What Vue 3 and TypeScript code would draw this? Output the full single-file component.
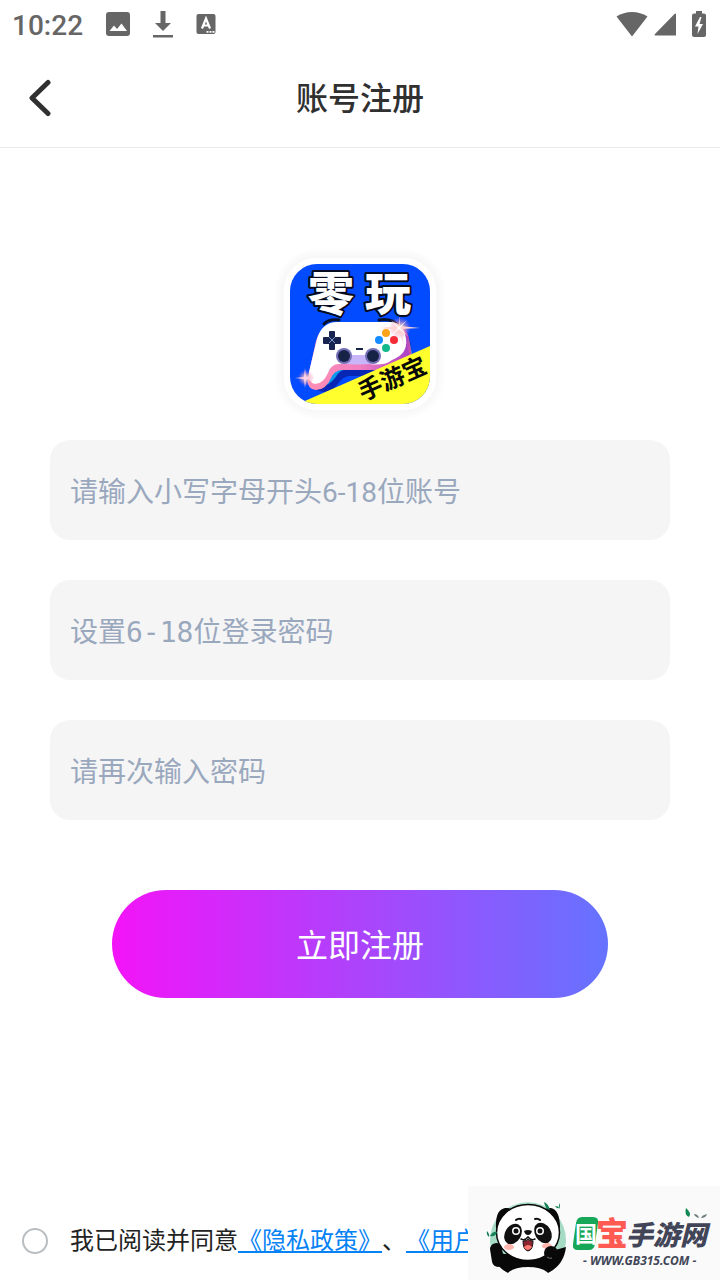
<script setup lang="ts">
import { reactive, ref } from 'vue'

interface Field {
  key: 'account' | 'password' | 'confirm'
  type: 'text' | 'password'
  placeholder: string
  mono: boolean
}

const fields: Field[] = [
  { key: 'account', type: 'text', placeholder: '请输入小写字母开头6-18位账号', mono: false },
  { key: 'password', type: 'password', placeholder: '设置6-18位登录密码', mono: true },
  { key: 'confirm', type: 'password', placeholder: '请再次输入密码', mono: true },
]

const form = reactive({ account: '', password: '', confirm: '' })
const agreed = ref(false)
</script>

<template>
  <div class="page">
    <div class="status">
      <div class="status-group">
        <span class="time">10:22</span>
        <svg width="24" height="24" viewBox="0 0 24 24">
          <path fill="#666" fill-rule="evenodd" d="M3 0h18a3 3 0 0 1 3 3v18a3 3 0 0 1-3 3H3a3 3 0 0 1-3-3V3a3 3 0 0 1 3-3zM3.500 19h17.500l-5.500-7.500-4.500 5.500-3-3.500z" />
        </svg>
        <svg width="20" height="28" viewBox="0 0 20 28">
          <path fill="#666" d="M7.500 1h5v12H18l-8 8-8-8h5.500zM0 25h20v2.500H0z" />
        </svg>
        <svg width="20" height="22" viewBox="0 0 20 22">
          <rect x="0.500" y="1" width="19" height="20" rx="2" fill="#666" />
          <path d="M6 15.500 10 5.500l4 10M7.300 12.500h5.400" fill="none" stroke="#fff" stroke-width="2.200" />
          <path d="M10.500 18h2v1.700h-2zM13.500 18h2v1.700h-2zM16.500 18h2v1.700h-2z" fill="#fff" />
        </svg>
      </div>
      <div class="status-group right">
        <svg width="32" height="26" viewBox="0 0 32 26">
          <path fill="#666" d="M16 25.500 0.500 5.500Q7.500 1 16 1t15.500 4.500z" />
        </svg>
        <svg width="23" height="24" viewBox="0 0 23 24">
          <path fill="#666" d="M22 1.500V23.500H1q-1-.5 0-1.500L20.500 2z" />
        </svg>
        <svg class="battery" width="14" height="28" viewBox="0 0 14 28">
          <path fill="#666" d="M4 1h6v2.500h2q2 0 2 2V25q0 2-2 2H2q-2 0-2-2V5.500q0-2 2-2h2z" />
          <path fill="#fff" d="M8 7 3 16.500h3.500L5.500 24 11 14H7.500L9.500 7z" />
        </svg>
      </div>
    </div>

    <header class="header">
      <button class="back" type="button" aria-label="返回">
        <svg width="24" height="38" viewBox="0 0 24 38">
          <path d="M20 3.500 4 19l16 15.500" fill="none" stroke="#303030" stroke-width="5" stroke-linecap="round" stroke-linejoin="round" />
        </svg>
      </button>
      <h1>账号注册</h1>
    </header>

    <main class="main">
      <div class="logo">
        <svg class="logo-art" width="140" height="140" viewBox="0 0 140 140" role="img" aria-label="零玩手游宝">
          <defs>
            <clipPath id="tile"><rect width="140" height="140" rx="27" /></clipPath>
            <linearGradient id="rim" x1="0" y1="0" x2="1" y2="0">
              <stop offset="0" stop-color="#ff8fb5" />
              <stop offset="0.500" stop-color="#f27fc0" />
              <stop offset="1" stop-color="#a73dc8" />
            </linearGradient>
            <linearGradient id="side" x1="0" y1="0" x2="0" y2="1">
              <stop offset="0" stop-color="#9a3fd0" />
              <stop offset="1" stop-color="#f0618f" />
            </linearGradient>
            <radialGradient id="glow">
              <stop offset="0" stop-color="#fff" />
              <stop offset="0.300" stop-color="#ffc9bd" stop-opacity="0.800" />
              <stop offset="1" stop-color="#f478b5" stop-opacity="0" />
            </radialGradient>
          </defs>
          <g clip-path="url(#tile)">
            <rect width="140" height="140" fill="#034bff" />
            <path d="M34 60q4-5 15-4M89 56q13-2 20 6" fill="none" stroke="#06112f" stroke-width="3" stroke-linecap="round" />
            <path d="M51 60h52q13 2 17 16l7 38q-5 19-23 7L90 112H59q-7 1-12 9-9 11-20 5l-3-10z" fill="#0726b3" />
            <path d="M53 60h50q12 2 16 15l7 31q1 16-13 12-8-3-17-13H57q-8 1-12 9-8 10-16 7l-4-9z" fill="#0999ec" />
            <path d="M100 60q16 0 19 14l6 36-35-2z" fill="url(#side)" />
            <path d="M48 59h54q12 2 14 16l6 29q1 15-13 12-8-3-14-10H51q-7 1-10 8-5 12-15 12-10-1-8-13l8-36q5-17 22-18z" fill="url(#rim)" />
            <path d="M47 58h54q13 1 15 17 2 15-14 21-7 6-23 4H49q-8 0-11 9-5 11-13 11-8-2-6-12l8-33q5-17 20-17z" fill="#fff" />
            <path d="M48 91h42l-4 8q-20 3-36 0z" fill="#c9b5fa" />
            <g fill="#192550">
              <rect x="39" y="67" width="6" height="19" rx="1" />
              <rect x="33" y="73" width="18" height="7" rx="1" />
            </g>
            <path d="m39 73 6 6m0-6-6 6" stroke="#7a9ccd" stroke-width="1" />
            <path d="M66 85h7" stroke="#172247" stroke-width="2" />
            <circle cx="54" cy="92" r="8" fill="#746fb6" />
            <circle cx="54" cy="92" r="6" fill="#172247" />
            <circle cx="83" cy="92" r="8" fill="#746fb6" />
            <circle cx="83" cy="92" r="6" fill="#172247" />
            <circle cx="96" cy="69" r="4" fill="#ffa31a" />
            <circle cx="89" cy="76" r="4" fill="#168bff" />
            <circle cx="104" cy="76" r="4" fill="#f52c37" />
            <circle cx="96" cy="84" r="4" fill="#13b98c" />
            <path d="M8 140 140 82v58z" fill="#ffff2d" />
            <circle cx="110" cy="64" r="11" fill="url(#glow)" />
            <path d="m109 50 1 12 20 2-19 1 3 17-5-16-19-2 19-2z" fill="#ffd5d5" />
            <path d="m101 56 8 7 8-7-7 8 8 8-9-7-8 7 7-8z" fill="#fff" />
            <circle cx="16" cy="114" r="8" fill="url(#glow)" />
            <path d="m15 104 1 9 9 1-9 1-1 9-1-9-9-1 9-1z" fill="#ffd0ea" />
          </g>
          <text class="brand" x="18" y="46">零</text>
          <text class="brand" x="75" y="46">玩</text>
          <text class="ribbon" transform="translate(73 137) rotate(-24)">手游宝</text>
        </svg>
      </div>

      <form class="form" @submit.prevent>
        <input
          v-for="field in fields"
          :key="field.key"
          v-model="form[field.key]"
          class="field"
          :class="{ mono: field.mono }"
          :type="field.type"
          :placeholder="field.placeholder"
          :aria-label="field.placeholder"
          autocomplete="off"
        />
        <button class="submit" type="submit">立即注册</button>
      </form>
    </main>

    <footer class="agreement">
      <input id="agree" v-model="agreed" class="tick" type="checkbox" />
      <span class="terms"><label for="agree">我已阅读并同意</label><a href="#privacy">《隐私政策》</a>、<a href="#terms">《用户协议》</a></span>
    </footer>

    <aside class="badge">
      <svg width="252" height="94" viewBox="0 0 252 94" role="img" aria-label="国宝手游网">
        <path d="M34 82a38 38 0 1 1 52 0z" fill="#a5dac4" />
        <path d="M23 60q0 18 17 27h40q16-8 18-26l-18 5-44 2z" fill="#080808" />
        <path d="M38 89q6-8 22-8t22 8z" fill="#fafafa" />
        <path d="M28 42q-1-18 9-20 9-1 12 7L33 46zM92 42q0-18-9-20-9-1-12 7l16 17z" fill="#090909" />
        <ellipse cx="60" cy="46.500" rx="31.500" ry="28" fill="#fff" stroke="#080808" stroke-width="1.500" />
        <rect x="23" y="57" width="12" height="24" rx="6" fill="#090909" transform="rotate(-9 29 69)" />
        <ellipse cx="45" cy="48" rx="8" ry="11" transform="rotate(30 45 48)" fill="#101010" />
        <ellipse cx="75" cy="47" rx="8" ry="11" transform="rotate(-30 75 47)" fill="#101010" />
        <circle cx="48" cy="45" r="4" fill="#fff" /><circle cx="48" cy="45" r="2.500" fill="#111" />
        <circle cx="72" cy="45" r="4" fill="#fff" /><circle cx="72" cy="45" r="2.500" fill="#111" />
        <path d="M48 34q2-2 5-1M67 33q3-1 5 1" fill="none" stroke="#111" stroke-width="2" stroke-linecap="round" />
        <path d="M56 45q4-2 8 0-1 4-4 4-3 0-4-4z" fill="#111" />
        <path d="M53 53q4 2 7-2 3 4 7 2" fill="none" stroke="#111" stroke-width="1.500" stroke-linecap="round" />
        <path d="M55 55q5 0 5-2 1 2 5 2 0 9-5 10-5-1-5-10z" fill="#8b2630" stroke="#111" />
        <path d="M56 61q4-4 8 0-2 3-4 3-3 0-4-3z" fill="#ff7b74" />
        <ellipse cx="41" cy="61" rx="5" ry="3" fill="#ffb5ad" />
        <ellipse cx="79" cy="60" rx="5" ry="3" fill="#ffb5ad" />
        <ellipse cx="83" cy="67" rx="7" ry="7" fill="#090909" />
        <path d="M79 71q2 2 5 1" fill="none" stroke="#777" />
        <path d="M76 16q4 1 6 8-5-1-6-8zM22 50q3-5 7-4-1 5-7 4zM19 45q3 3 2 6-3-2-2-6zM87 20q4 0 4 2-2 1-4-2zM91 17q2 3 0 6z" fill="#168257" />
        <path d="M218 22q6 5 3 9-5-2-3-9z" fill="#118a55" />
        <path d="M226 28q4 0 5 4-4-1-5-4zM239 28q-5 1-6 4 5 0 6-4z" fill="#6e7f7e" />
        <path d="M114 31h11q6 0 5 6l-3 21q-1 6-6 6h-11q-6 0-5-6l3-21q1-6 6-6z" fill="#16a758" />
        <text class="site-inner" x="107" y="56">国</text>
        <text class="site-main" x="128" y="59">宝</text>
        <text class="site-rest" x="158" y="59">手游网</text>
        <text class="site-url" x="115" y="79">- WWW.GB315.COM -</text>
      </svg>
    </aside>
  </div>
</template>

<style>
body {
  margin: 0;
  background: #fff;
}
</style>

<style scoped>
* {
  box-sizing: border-box;
}

.page {
  position: relative;
  display: flex;
  flex-direction: column;
  min-height: 100vh;
  overflow: hidden;
  background: #fff;
  color: #222;
  font-family: Roboto, "Noto Sans CJK SC", sans-serif;
}

.page svg {
  display: block;
  flex: none;
}

.status {
  display: flex;
  justify-content: space-between;
  align-items: center;
  height: 48px;
  padding: 0 14px 0 12px;
}

.status-group {
  display: flex;
  align-items: center;
  gap: 23px;
}

.status-group.right {
  gap: 6px;
}

.battery {
  margin-left: 9px;
}

.time {
  padding-top: 4px;
  color: #666;
  font-size: 28px;
  font-weight: 500;
  line-height: 44px;
}

.header {
  display: grid;
  grid-template-columns: 80px 1fr 80px;
  align-items: center;
  height: 100px;
  border-bottom: 1px solid #ebebeb;
}

.back {
  display: flex;
  justify-content: center;
  padding: 12px 0;
  border: 0;
  background: none;
}

h1 {
  margin: 0;
  padding-bottom: 4px;
  color: #303030;
  font-family: "Noto Sans CJK SC", sans-serif;
  font-size: 32px;
  font-weight: 500;
  line-height: 48px;
  text-align: center;
}

.main {
  display: flex;
  flex-direction: column;
  gap: 30px;
  padding: 110px 50px 40px;
}

.logo {
  align-self: center;
  padding: 6px;
  border-radius: 32px;
  background: #fff;
  box-shadow: 0 0 6px 6px rgba(0, 0, 0, 0.03);
}

.logo-art {
  overflow: visible;
}

.brand {
  fill: #fff;
  stroke: #050b20;
  stroke-width: 4px;
  stroke-linejoin: round;
  paint-order: stroke;
  font-family: "Noto Sans CJK SC", sans-serif;
  font-size: 46px;
  font-weight: 900;
}

.ribbon {
  fill: #080808;
  font-family: "Noto Sans CJK SC", sans-serif;
  font-size: 24px;
  font-weight: 700;
}

.form {
  display: flex;
  flex-direction: column;
  gap: 40px;
}

.field {
  width: 100%;
  height: 100px;
  padding: 4px 20px 0;
  border: 0;
  border-radius: 20px;
  outline: none;
  background: #f5f5f5;
  color: #303030;
  font-family: Roboto, "Noto Sans CJK SC", sans-serif;
  font-size: 28px;
}

.field.mono {
  font-family: "DejaVu Sans Mono", "Noto Sans CJK SC", monospace;
}

.field::placeholder {
  color: #9aa8be;
  opacity: 1;
}

.submit {
  align-self: center;
  width: 80%;
  height: 108px;
  margin-top: 30px;
  padding: 0 0 2px;
  border: 0;
  border-radius: 54px;
  background: linear-gradient(90deg, #f314f8, #6573ff);
  color: #fff;
  font-family: "Noto Sans CJK SC", sans-serif;
  font-size: 32px;
}

.agreement {
  display: flex;
  align-items: center;
  gap: 22px;
  height: 78px;
  margin-top: auto;
  padding-left: 22px;
  overflow: hidden;
  font-family: "Noto Sans CJK SC", sans-serif;
  font-size: 24px;
  line-height: 36px;
  text-spacing-trim: space-all;
  white-space: nowrap;
}

.terms {
  padding-bottom: 4px;
}

.tick {
  appearance: none;
  flex: none;
  width: 26px;
  height: 26px;
  margin: 0;
  border: 2px solid #b9bec2;
  border-radius: 50%;
  background: #fff;
}

.tick:checked {
  border-color: #0582f5;
  background: #0582f5;
}

.terms a {
  color: #0582f5;
  text-decoration: underline;
}

.badge {
  position: absolute;
  right: 0;
  bottom: 0;
  background: #fafafa;
}

.site-inner,
.site-main,
.site-rest {
  font-family: "Noto Sans CJK SC", sans-serif;
  font-weight: 900;
}

.site-inner {
  fill: #fff;
  font-size: 22px;
  font-weight: 700;
}

.site-main {
  fill: #ff5b52;
  font-size: 32px;
}

.site-rest {
  fill: #414557;
  font-size: 27px;
  font-style: italic;
}

.site-url {
  fill: #414557;
  font-family: "Noto Sans", sans-serif;
  font-size: 12px;
  font-style: italic;
  font-weight: 700;
}
</style>
